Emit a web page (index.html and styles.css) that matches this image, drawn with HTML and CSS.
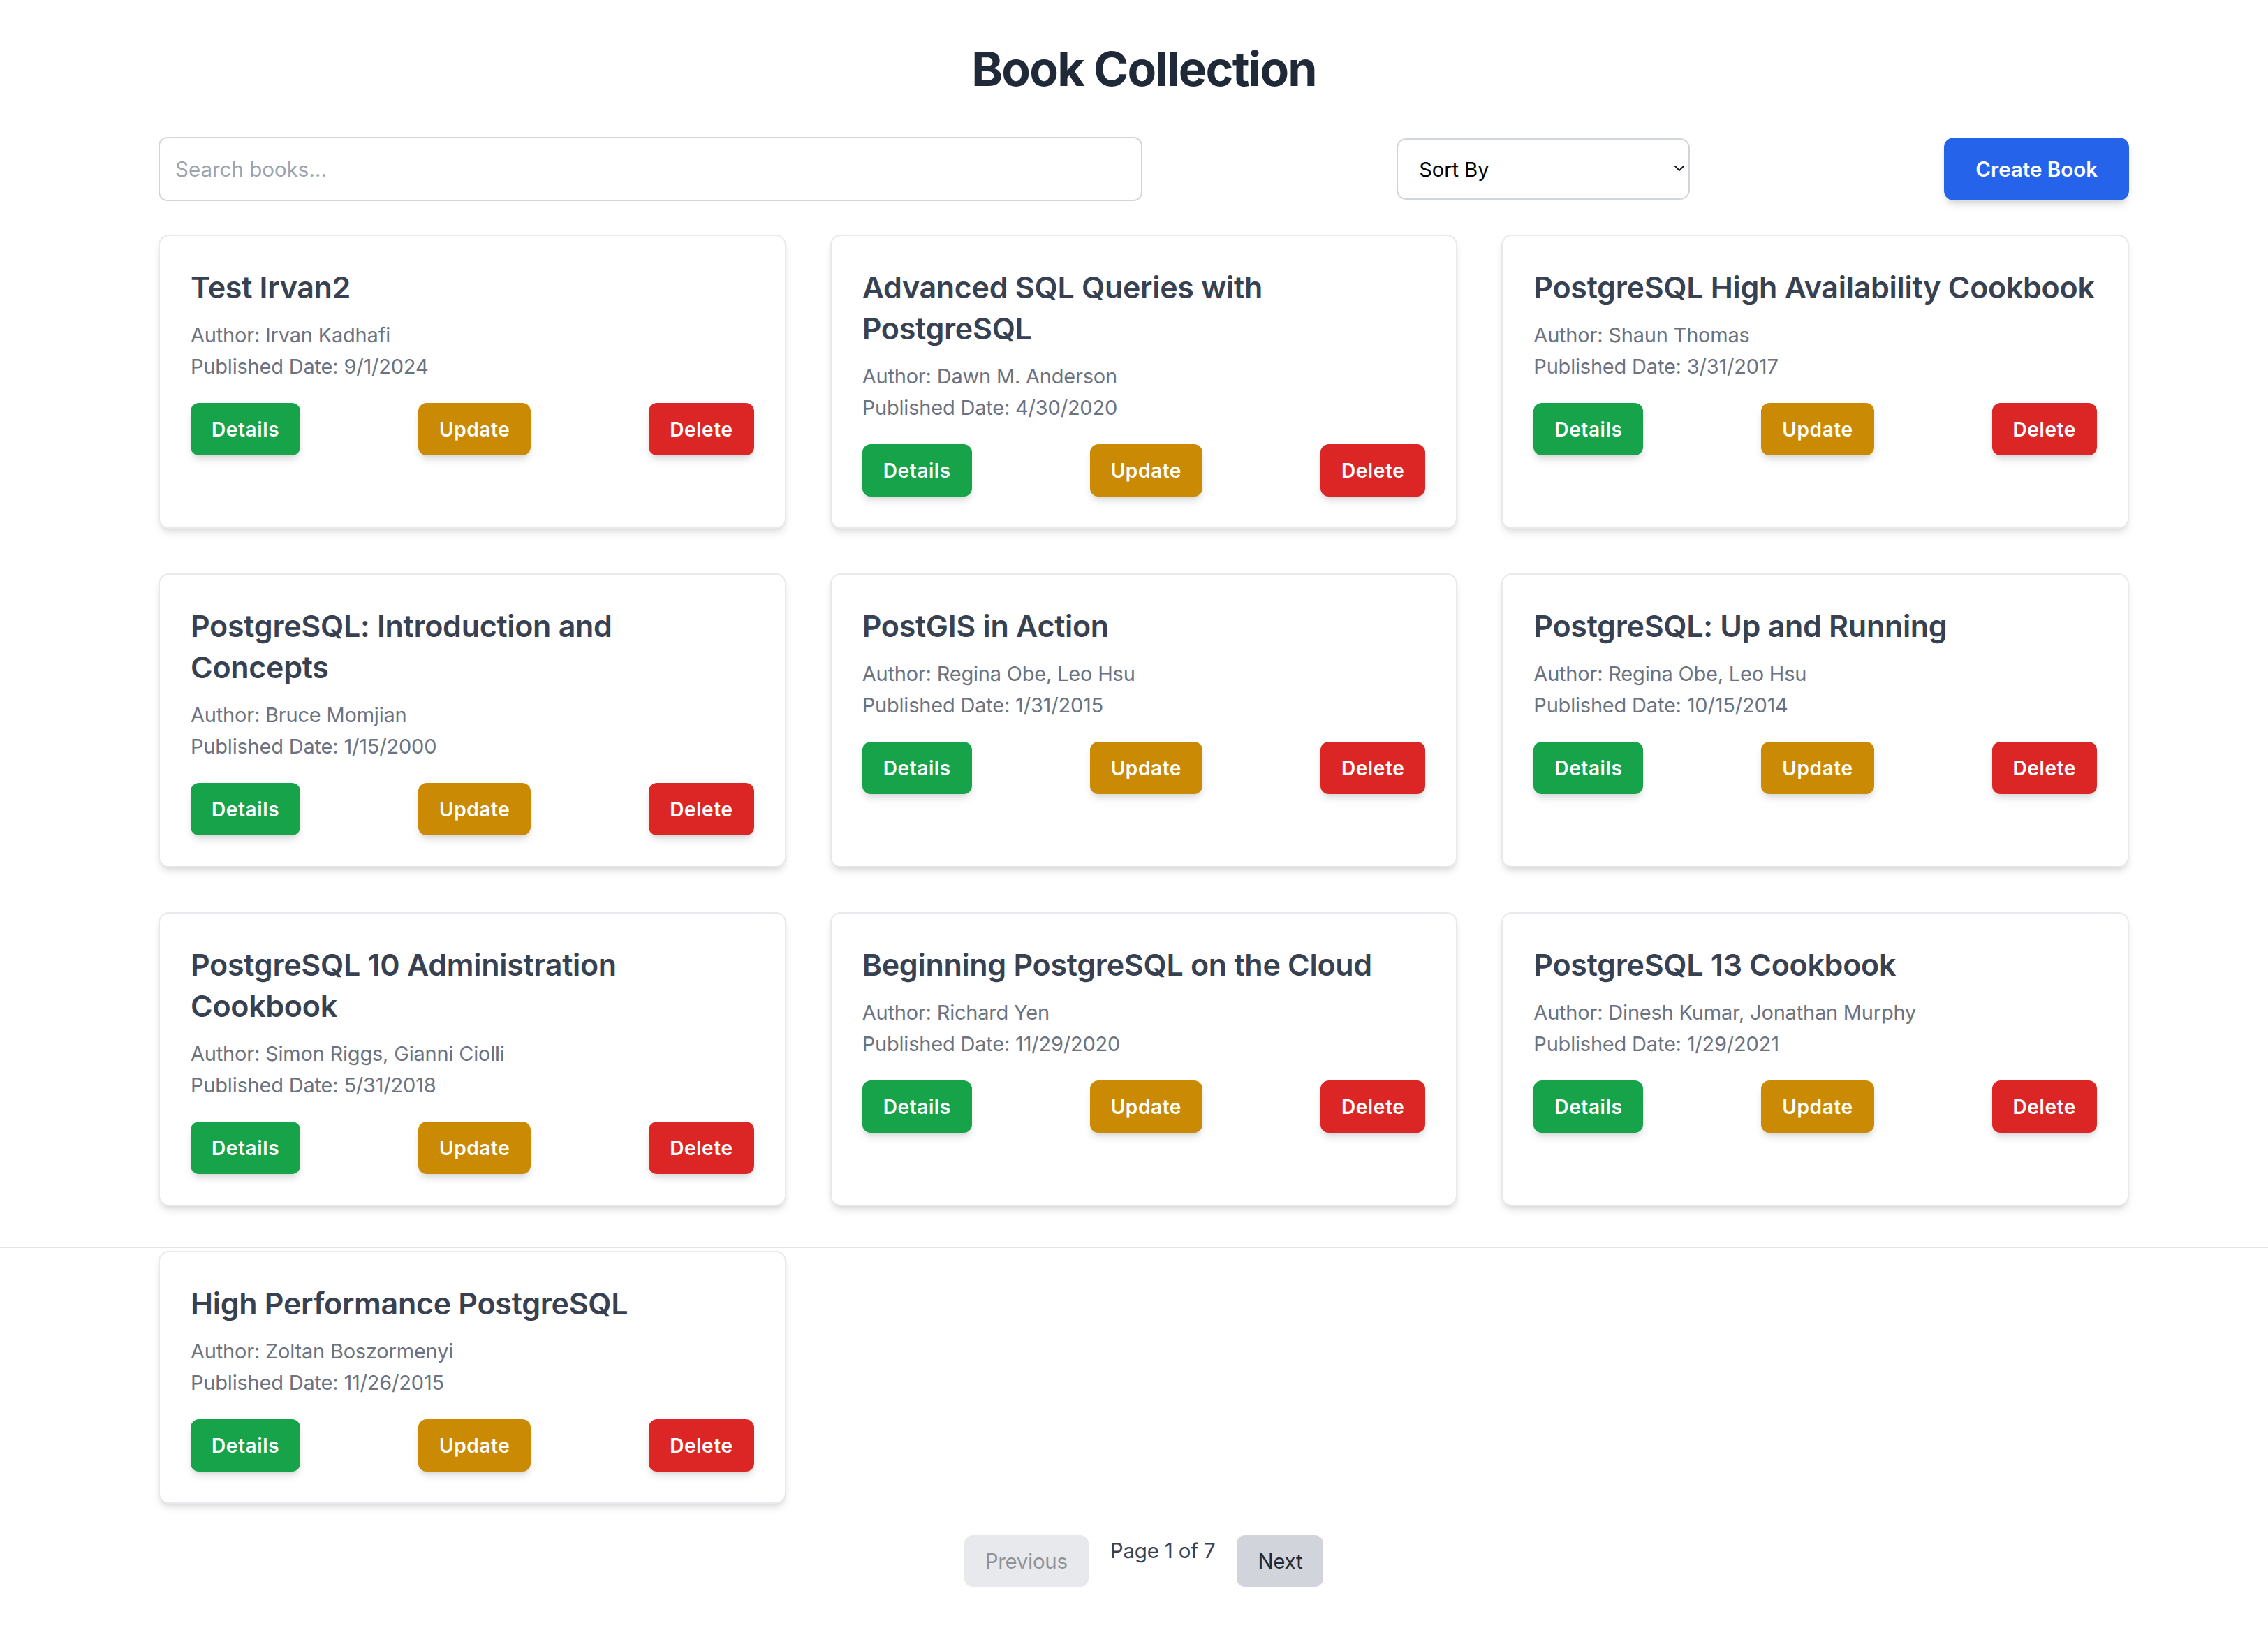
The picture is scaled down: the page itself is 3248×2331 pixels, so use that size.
FILE: index.html
```html
<!DOCTYPE html>
<html lang="en">
<head>
<meta charset="utf-8">
<title>Book Collection</title>
<link rel="stylesheet" href="styles.css">
</head>
<body>
<div class="page">
  <h1 class="heading">Book Collection</h1>
  <div class="toolbar">
    <input class="search" type="text" placeholder="Search books...">
    <div class="select-wrap">
      <select class="sort"><option>Sort By</option></select>
      <svg class="chev" width="16" height="10" viewBox="0 0 16 10"><path d="M1.5 1.5 L8 8 L14.5 1.5" fill="none" stroke="#111" stroke-width="1.8"/></svg>
    </div>
    <button class="btn-create">Create Book</button>
  </div>

  <div class="grid">
    <div class="card">
      <h2 class="card-title">Test Irvan2</h2>
      <p class="meta">Author: Irvan Kadhafi</p>
      <p class="meta">Published Date: 9/1/2024</p>
      <div class="actions"><button class="btn btn-green">Details</button><button class="btn btn-yellow">Update</button><button class="btn btn-red">Delete</button></div>
    </div>
    <div class="card">
      <h2 class="card-title">Advanced SQL Queries with<br>PostgreSQL</h2>
      <p class="meta">Author: Dawn M. Anderson</p>
      <p class="meta">Published Date: 4/30/2020</p>
      <div class="actions"><button class="btn btn-green">Details</button><button class="btn btn-yellow">Update</button><button class="btn btn-red">Delete</button></div>
    </div>
    <div class="card">
      <h2 class="card-title">PostgreSQL High Availability Cookbook</h2>
      <p class="meta">Author: Shaun Thomas</p>
      <p class="meta">Published Date: 3/31/2017</p>
      <div class="actions"><button class="btn btn-green">Details</button><button class="btn btn-yellow">Update</button><button class="btn btn-red">Delete</button></div>
    </div>

    <div class="card">
      <h2 class="card-title">PostgreSQL: Introduction and<br>Concepts</h2>
      <p class="meta">Author: Bruce Momjian</p>
      <p class="meta">Published Date: 1/15/2000</p>
      <div class="actions"><button class="btn btn-green">Details</button><button class="btn btn-yellow">Update</button><button class="btn btn-red">Delete</button></div>
    </div>
    <div class="card">
      <h2 class="card-title">PostGIS in Action</h2>
      <p class="meta">Author: Regina Obe, Leo Hsu</p>
      <p class="meta">Published Date: 1/31/2015</p>
      <div class="actions"><button class="btn btn-green">Details</button><button class="btn btn-yellow">Update</button><button class="btn btn-red">Delete</button></div>
    </div>
    <div class="card">
      <h2 class="card-title">PostgreSQL: Up and Running</h2>
      <p class="meta">Author: Regina Obe, Leo Hsu</p>
      <p class="meta">Published Date: 10/15/2014</p>
      <div class="actions"><button class="btn btn-green">Details</button><button class="btn btn-yellow">Update</button><button class="btn btn-red">Delete</button></div>
    </div>

    <div class="card">
      <h2 class="card-title">PostgreSQL 10 Administration<br>Cookbook</h2>
      <p class="meta">Author: Simon Riggs, Gianni Ciolli</p>
      <p class="meta">Published Date: 5/31/2018</p>
      <div class="actions"><button class="btn btn-green">Details</button><button class="btn btn-yellow">Update</button><button class="btn btn-red">Delete</button></div>
    </div>
    <div class="card">
      <h2 class="card-title">Beginning PostgreSQL on the Cloud</h2>
      <p class="meta">Author: Richard Yen</p>
      <p class="meta">Published Date: 11/29/2020</p>
      <div class="actions"><button class="btn btn-green">Details</button><button class="btn btn-yellow">Update</button><button class="btn btn-red">Delete</button></div>
    </div>
    <div class="card">
      <h2 class="card-title">PostgreSQL 13 Cookbook</h2>
      <p class="meta">Author: Dinesh Kumar, Jonathan Murphy</p>
      <p class="meta">Published Date: 1/29/2021</p>
      <div class="actions"><button class="btn btn-green">Details</button><button class="btn btn-yellow">Update</button><button class="btn btn-red">Delete</button></div>
    </div>

    <div class="card">
      <h2 class="card-title">High Performance PostgreSQL</h2>
      <p class="meta">Author: Zoltan Boszormenyi</p>
      <p class="meta">Published Date: 11/26/2015</p>
      <div class="actions"><button class="btn btn-green">Details</button><button class="btn btn-yellow">Update</button><button class="btn btn-red">Delete</button></div>
    </div>
  </div>

  <div class="pager">
    <button class="pg-btn pg-disabled">Previous</button>
    <span class="pg-label">Page 1 of 7</span>
    <button class="pg-btn">Next</button>
  </div>
</div>
<div class="seam"></div>
</body>
</html>
```
FILE: styles.css
```css
* { box-sizing: border-box; }
html, body { margin: 0; padding: 0; background: #ffffff; }
body {
  position: relative;
  min-height: 2331px;
  font-family: Inter, "Noto Sans", "Liberation Sans", sans-serif;
  color: #1f2937;
}
.page { padding: 60px 199px 0 227px; }

.heading {
  margin: 0 0 60px;
  text-align: center;
  font-size: 68px;
  line-height: 76px;
  font-weight: 700;
  color: #1f2937;
  letter-spacing: -1.8px;
}

.toolbar {
  display: flex;
  justify-content: space-between;
  align-items: center;
  margin-bottom: 48px;
}
.search {
  width: 1409px;
  height: 92px;
  border: 2px solid #d1d5db;
  border-radius: 13px;
  padding: 0 22px;
  font-family: inherit;
  font-size: 29.5px;
  color: #111827;
  outline: none;
  background: #fff;
}
.search::placeholder { color: #9ca3af; }

.select-wrap { position: relative; width: 420px; height: 88px; }
.sort {
  -webkit-appearance: none;
  appearance: none;
  width: 100%;
  height: 100%;
  border: 2px solid #d1d5db;
  border-radius: 14px;
  background: #fff;
  padding: 0 0 0 30px;
  font-family: inherit;
  font-size: 29px;
  color: #000;
}
.chev { position: absolute; right: 7px; top: 38px; pointer-events: none; }

.btn-create {
  height: 90px;
  padding: 0 45px;
  border: none;
  border-radius: 14px;
  background: #2563eb;
  color: #fff;
  font-family: inherit;
  font-size: 29.5px;
  font-weight: 600;
  box-shadow: 0 8px 12px -2px rgba(0,0,0,0.12), 0 4px 8px -4px rgba(0,0,0,0.1);
}

.grid {
  display: grid;
  grid-template-columns: repeat(3, minmax(0, 1fr));
  column-gap: 63px;
  row-gap: 64px;
}
.card {
  background: #fff;
  border: 2px solid #e8e9ec;
  border-radius: 15px;
  padding: 44px;
  box-shadow: 0 8px 12px -2px rgba(0,0,0,0.1), 0 4px 8px -4px rgba(0,0,0,0.1);
}
.card-title {
  margin: 0 0 16px;
  font-size: 43px;
  line-height: 59px;
  font-weight: 600;
  color: #374151;
  white-space: nowrap;
  letter-spacing: -0.3px;
}
.meta {
  margin: 0;
  font-size: 29px;
  line-height: 45px;
  color: #6b7280;
  letter-spacing: -0.2px;
}
.actions {
  display: flex;
  justify-content: space-between;
  margin-top: 30px;
}
.btn {
  height: 75px;
  padding: 0 30px;
  border: none;
  border-radius: 12px;
  color: #fff;
  font-family: inherit;
  font-size: 28px;
  font-weight: 600;
  letter-spacing: 0.6px;
  box-shadow: 0 8px 12px -2px rgba(0,0,0,0.12), 0 4px 8px -4px rgba(0,0,0,0.1);
}
.btn-green { background: #16a34a; }
.btn-yellow { background: #ca8a04; }
.btn-red { background: #dc2626; }

.pager {
  display: flex;
  justify-content: center;
  gap: 31px;
  margin-top: 45px;
}
.pg-btn {
  height: 74px;
  padding: 0 30px;
  border: none;
  border-radius: 12px;
  background: #d1d5db;
  color: #1f2937;
  font-family: inherit;
  font-size: 29.5px;
  letter-spacing: -0.3px;
}
.pg-disabled { opacity: 0.5; }
.pg-label {
  font-size: 29.5px;
  line-height: 45px;
  color: #374151;
  letter-spacing: -0.2px;
}

.seam {
  position: absolute;
  left: 0;
  right: 0;
  top: 1785px;
  height: 2px;
  background: #e3e3e3;
}
```
